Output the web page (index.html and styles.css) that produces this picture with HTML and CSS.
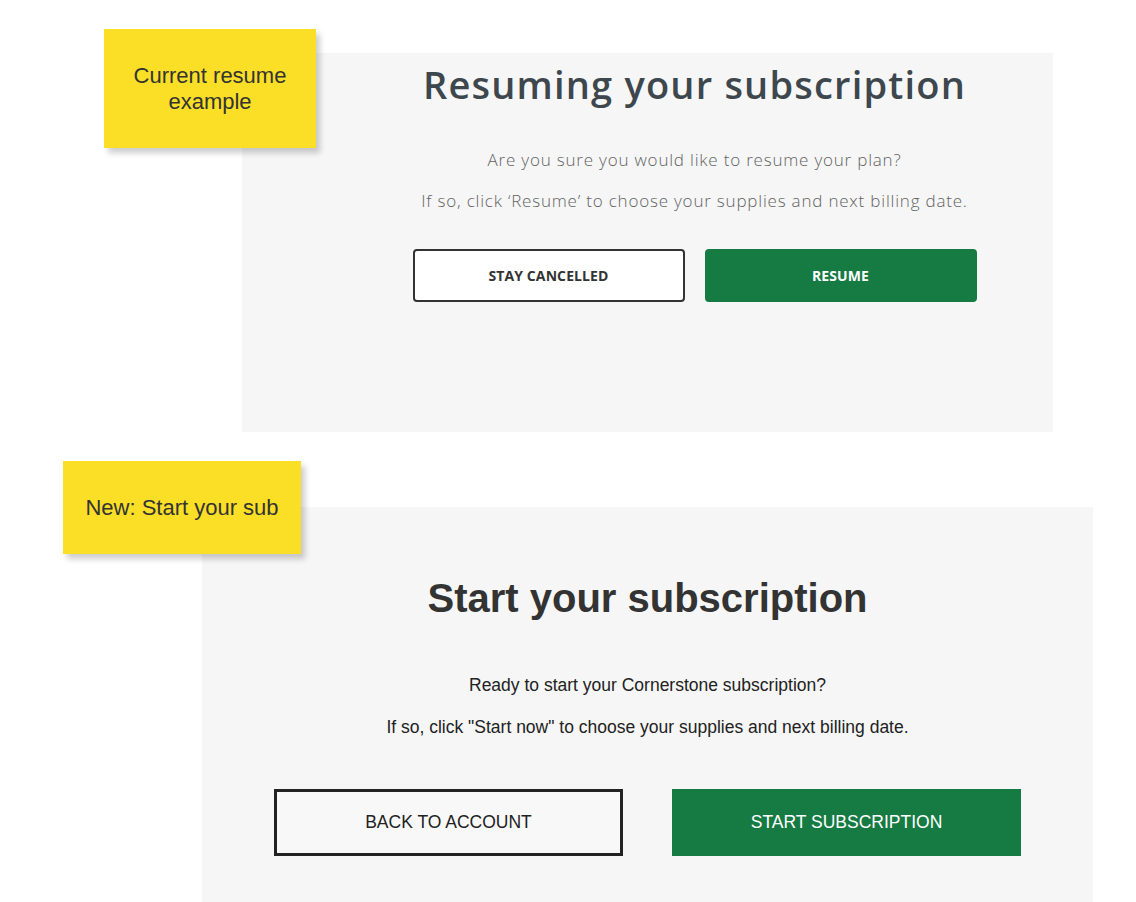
FILE: index.html
```html
<!DOCTYPE html>
<html lang="en">
<head>
<meta charset="utf-8">
<title>Subscription dialogs</title>
<link rel="stylesheet" href="styles.css">
</head>
<body>
<main class="page">
  <section class="board board-current">
    <div class="sticky sticky-current">Current resume<br>example</div>
    <div class="panel panel-current">
      <h1 class="cur-title">Resuming your subscription</h1>
      <p class="cur-text cur-text-first">Are you sure you would like to resume your plan?</p>
      <p class="cur-text">If so, click ‘Resume’ to choose your supplies and next billing date.</p>
      <div class="cur-actions">
        <button class="cur-btn cur-btn-outline">STAY CANCELLED</button>
        <button class="cur-btn cur-btn-primary">RESUME</button>
      </div>
    </div>
  </section>

  <section class="board board-new">
    <div class="sticky sticky-new">New: Start your sub</div>
    <div class="panel panel-new">
      <h1 class="new-title">Start your subscription</h1>
      <p class="new-text new-text-first">Ready to start your Cornerstone subscription?</p>
      <p class="new-text">If so, click "Start now" to choose your supplies and next billing date.</p>
      <div class="new-actions">
        <button class="new-btn new-btn-outline">BACK TO ACCOUNT</button>
        <button class="new-btn new-btn-primary">START SUBSCRIPTION</button>
      </div>
    </div>
  </section>
</main>
</body>
</html>
```

FILE: styles.css
```css
* { box-sizing: border-box; }

html, body {
  margin: 0;
  padding: 0;
  background: #ffffff;
}

body {
  width: 1136px;
  height: 902px;
  overflow: hidden;
  font-family: "Liberation Sans", Arial, sans-serif;
}

.page {
  display: flex;
  flex-direction: column;
}

.board {
  position: relative;
}

.panel {
  background: #f6f6f6;
  display: flex;
  flex-direction: column;
  align-items: center;
}

/* sticky notes */
.sticky {
  position: absolute;
  background: #fadf26;
  color: #333333;
  font-family: "Liberation Sans", Arial, sans-serif;
  font-size: 22px;
  line-height: 26px;
  text-align: center;
  display: flex;
  align-items: center;
  justify-content: center;
  box-shadow: 4px 5px 6px rgba(0, 0, 0, 0.2);
  z-index: 2;
}

.sticky-current {
  left: 104px;
  top: 29px;
  width: 212px;
  height: 119px;
}

.sticky-new {
  left: 63px;
  top: -46px;
  width: 238px;
  height: 93px;
}

/* current resume panel */
.panel-current {
  margin: 53px 0 0 242px;
  width: 811px;
  height: 379px;
  padding: 7px 0 0 94px;
}

.cur-title {
  margin: 0;
  font-family: "Open Sans", sans-serif;
  font-weight: 600;
  font-size: 38px;
  line-height: 48px;
  color: #3d474d;
  letter-spacing: 1.2px;
}

.cur-text {
  margin: 0;
  font-family: "Open Sans", sans-serif;
  font-weight: 300;
  font-size: 17px;
  line-height: 20px;
  color: #636363;
  letter-spacing: 0.8px;
}

.cur-text-first {
  margin-top: 42px;
  margin-bottom: 21px;
}

.cur-actions {
  display: flex;
  gap: 20px;
  margin-top: 38px;
}

.cur-btn {
  width: 272px;
  height: 53px;
  border-radius: 4px;
  font-family: "Open Sans", sans-serif;
  font-weight: 700;
  font-size: 14px;
  letter-spacing: 0.1px;
  cursor: pointer;
}

.cur-btn-outline {
  background: #ffffff;
  border: 2px solid #333333;
  color: #333333;
}

.cur-btn-primary {
  background: #167a43;
  border: none;
  color: #ffffff;
}

/* new start panel */
.board-new {
  margin-top: 75px;
}

.panel-new {
  margin-left: 202px;
  width: 891px;
  height: 400px;
  padding-top: 67px;
}

.new-title {
  margin: 0;
  font-family: "Liberation Sans", Arial, sans-serif;
  font-weight: 700;
  font-size: 40px;
  line-height: 48px;
  color: #333333;
}

.new-text {
  margin: 0;
  font-family: "Liberation Sans", Arial, sans-serif;
  font-size: 17.5px;
  line-height: 20px;
  color: #222222;
}

.new-text-first {
  margin-top: 53px;
  margin-bottom: 22px;
}

.new-actions {
  display: flex;
  gap: 49px;
  margin-top: 52px;
}

.new-btn {
  width: 349px;
  height: 67px;
  border-radius: 0;
  font-family: "Liberation Sans", Arial, sans-serif;
  font-size: 17.5px;
  cursor: pointer;
}

.new-btn-outline {
  background: #f8f8f8;
  border: 3px solid #222222;
  color: #222222;
}

.new-btn-primary {
  background: #167a43;
  border: none;
  color: #ffffff;
}
```
